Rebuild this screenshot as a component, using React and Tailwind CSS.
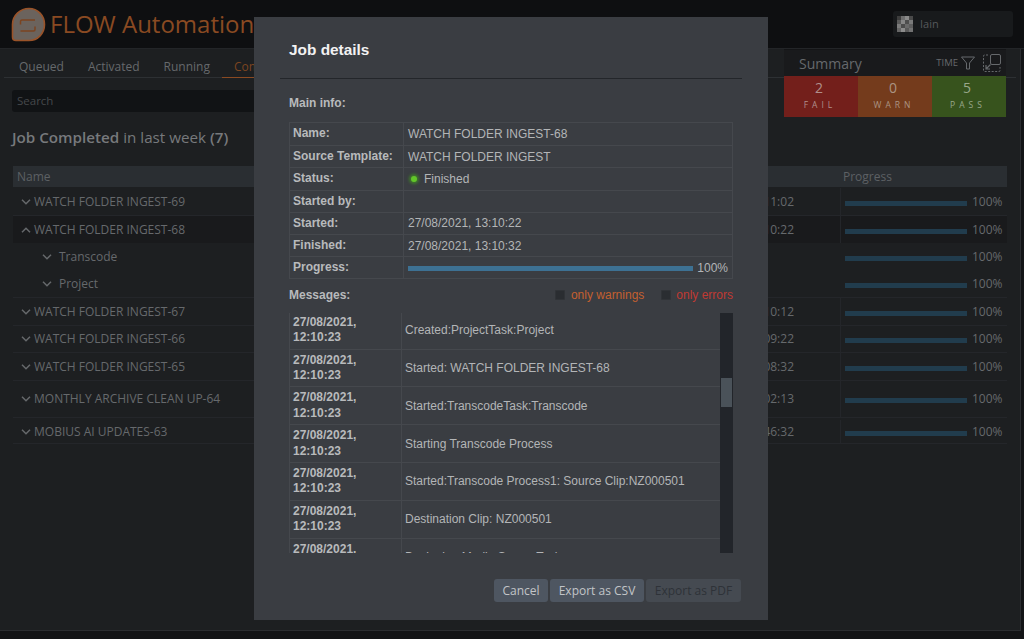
import React from "react";

const rows = [
  { name: "WATCH FOLDER INGEST-69", time: "27/08/2021, 13:11:02", h: "h-[28px]", line: true },
  { name: "WATCH FOLDER INGEST-68", time: "27/08/2021, 13:10:22", h: "h-[27px]", open: true, line: false },
  { name: "Transcode", h: "h-[28px]", child: true },
  { name: "Project", h: "h-[27px]", child: true, line: true },
  { name: "WATCH FOLDER INGEST-67", time: "27/08/2021, 13:10:12", h: "h-[28px]", line: true },
  { name: "WATCH FOLDER INGEST-66", time: "27/08/2021, 13:09:22", h: "h-[27px]", line: true },
  { name: "WATCH FOLDER INGEST-65", time: "27/08/2021, 13:08:32", h: "h-[28px]", line: true },
  { name: "MONTHLY ARCHIVE CLEAN UP-64", time: "26/08/2021, 17:02:13", h: "h-[37px]", line: true },
  { name: "MOBIUS AI UPDATES-63", time: "25/08/2021, 14:46:32", h: "h-[26px] pt-[2px]", line: true },
];

const info = [
  ["Name:", "WATCH FOLDER INGEST-68"],
  ["Source Template:", "WATCH FOLDER INGEST"],
  ["Status:", "status"],
  ["Started by:", ""],
  ["Started:", "27/08/2021, 13:10:22"],
  ["Finished:", "27/08/2021, 13:10:32"],
  ["Progress:", "progress"],
];

const messages = [
  "Created:ProjectTask:Project",
  "Started: WATCH FOLDER INGEST-68",
  "Started:TranscodeTask:Transcode",
  "Starting Transcode Process",
  "Started:Transcode Process1: Source Clip:NZ000501",
  "Destination Clip: NZ000501",
  "Beginning Media Server Task",
];

const avatar = [
  "#3d3d3d", "#6e6e6e", "#8a8a8a", "#4a4a4a",
  "#5a5a5a", "#868686", "#4e4e4e", "#7a7a7a",
  "#7c7c7c", "#4c4c4c", "#6a6a6a", "#5e5e5e",
  "#666666", "#8c8c8c", "#5a5a5a", "#727272",
];

function Chevron({ up }) {
  return (
    <svg width="10" height="6" viewBox="0 0 10 6" fill="none" stroke="#66696c" strokeWidth="1.5" className="shrink-0">
      <path d={up ? "M1 5.2 5 1.2l4 4" : "M1 .8l4 4 4-4"} />
    </svg>
  );
}

function Row({ r }) {
  return (
    <div className={`flex items-center ${r.h} ${r.open ? "bg-[#191a1c]" : ""} ${r.line ? "border-b border-[#24262a]" : ""}`}>
      <div className={`flex flex-1 items-center min-w-0 ${r.child ? "pl-[29px] gap-[7px]" : "pl-[8px] gap-[3px]"}`}>
        <Chevron up={r.open} />
        <span className="whitespace-nowrap text-[12px] text-[#66696c]">{r.name}</span>
      </div>
      <div className="w-[130px] shrink-0 text-right text-[12px] whitespace-nowrap text-[#66696c]">
        {r.time || ""}
      </div>
      <div className={`w-[167px] ml-[46px] shrink-0 h-full flex items-center pl-[4px] border-l ${r.child ? "border-transparent" : "border-[#24262a]"}`}>
        <div className="w-[122px] h-[5px] mt-[3px] bg-[#213c4d]" />
        <span className="ml-[5px] text-[12px] text-[#66696c]">100%</span>
      </div>
    </div>
  );
}

function Logo() {
  return (
    <svg width="35" height="35" viewBox="0 0 35 35" className="shrink-0">
      <path d="M18 1.5C26.8 1.5 33.5 8.6 33.5 17.5S26.8 33.5 18 33.5H5C2.8 33.5 1.5 32.2 1.5 30V17.5C1.5 8.6 9.2 1.5 18 1.5Z" fill="#6b635d" stroke="#9a5329" strokeWidth="1.6" />
      <path d="M9.5 17.5v-3c0-1 .7-1.5 1.5-1.5h13M24 19.5v3c0 1-.7 1.5-1.5 1.5H9.5" fill="none" stroke="#7c4420" strokeWidth="1.5" />
    </svg>
  );
}

function Stat({ bg, color, value, label }) {
  return (
    <div className={`flex-1 ${bg} ${color} leading-none pt-[5px] pr-[4px]`}>
      <div className="text-[14px]">{value}</div>
      <div className="mt-[6px] ml-[2px] text-[8.5px] tracking-[4px]">{label}</div>
    </div>
  );
}

function Background() {
  return (
    <div className="w-[1024px] h-[639px] overflow-hidden bg-[#131416] font-['Open_Sans',sans-serif]">
      <header className="h-[49px] bg-[#0e0f11] flex items-center pl-[11px] pr-[11px] border-b border-[#232528]">
        <Logo />
        <span className="ml-[4px] text-[24px] text-[#8a4a22] whitespace-nowrap">FLOW Automation</span>
        <div className="ml-auto w-[120px] h-[26px] rounded-[3px] bg-[#181a1c] flex items-center pl-[4px]">
          <div className="w-[16px] h-[16px] grid grid-cols-4">
            {avatar.map((c, i) => <span key={i} style={{ background: c }} />)}
          </div>
          <span className="ml-[7px] text-[11px] text-[#55585b]">Iain</span>
        </div>
      </header>

      <div className="w-[1021px] h-[582px] bg-[#1d1f21] border-r border-b border-[#2b2d30]">
        <div className="relative h-[29px] mx-[4px] flex items-start border-b border-[#2d3033] text-[12px] text-[#66696c]">
          <span className="ml-[15px] mt-[9px] leading-[17px]">Queued</span>
          <span className="ml-[24px] mt-[9px] leading-[17px]">Activated</span>
          <span className="ml-[24px] mt-[9px] leading-[17px]">Running</span>
          <span className="ml-[12px] h-[29px] px-[12px] pt-[9px] leading-[17px] text-[#7c4520] border-b border-[#8a4a22]">Completed</span>
          <div className="absolute right-[10px] top-0 w-[222px] h-[68px] flex flex-col bg-[#191a1c] z-10">
            <div className="h-[27px] flex items-center pl-[15px] pr-[5px] border-t border-[#141517] text-[#66696c]">
              <span className="text-[14px]">Summary</span>
              <span className="ml-auto text-[9.5px]">TIME</span>
              <svg width="14" height="14" viewBox="0 0 14 14" fill="none" stroke="#66696c" strokeWidth="1" className="ml-[3px]">
                <path d="M.5 1h13L8.5 7v6L5.5 13V7z" />
              </svg>
              <svg width="18" height="18" viewBox="0 0 18 18" fill="none" stroke="#66696c" strokeWidth="1" className="ml-[8px]">
                <rect x="7.5" y=".5" width="10" height="10" rx="1.5" />
                <path d="M5 1H1.5a1 1 0 0 0-1 1v14.5a1 1 0 0 0 1 1H16a1 1 0 0 0 1-1V13" strokeDasharray="2 1.5" />
                <path d="M7.5 10.5l-4.5 4.5M3 11v4h4" strokeWidth="1.2" />
              </svg>
            </div>
            <div className="flex flex-1 text-center">
              <Stat bg="bg-[#731f1b]" color="text-[#b08f8c]" value="2" label="FAIL" />
              <Stat bg="bg-[#743b1c]" color="text-[#ab9483]" value="0" label="WARN" />
              <Stat bg="bg-[#37531d]" color="text-[#98a78a]" value="5" label="PASS" />
            </div>
          </div>
        </div>

        <div className="mx-[12px] mt-[12px] h-[22px] w-[500px] rounded-[3px] bg-[#111315] pl-[5px] text-[11.5px] leading-[22px] text-[#45484b]">Search</div>

        <h2 className="ml-[12px] mt-[13px] h-[24px] text-[15.2px] leading-[24px] text-[#77797c]">
          <b className="font-semibold">Job Completed</b> in last week <b className="font-semibold">(7)</b>
        </h2>

        <div className="ml-[13px] mt-[17px] w-[994px]">
          <div className="h-[21px] mb-[1px] flex items-center bg-[#2a2e32] text-[12px] text-[#5d6064]">
            <span className="pl-[4px]">Name</span>
            <span className="ml-auto w-[164px]">Progress</span>
          </div>
          {rows.map((r) => <Row key={r.name} r={r} />)}
        </div>
      </div>
    </div>
  );
}

function Modal() {
  return (
    <div className="absolute left-[254px] top-[17px] w-[514px] h-[603px] bg-[#3a3d42] px-[26px] font-['Liberation_Sans',Arial,sans-serif] text-[12px] text-[#b3b5b7]">
      <div className="h-[62px] border-b border-[#23262a] pl-[9px] pt-[23px] text-[15.4px] leading-[20px] font-bold text-[#f2f2f2]">Job details</div>
      <div className="ml-[9px] mt-[17px] leading-[14px] font-bold text-[#b8babc]">Main info:</div>

      <div className="ml-[9px] mt-[12px] w-[444px] border border-[#45484d]">
        {info.map(([k, v], i) => (
          <div key={k} className={`flex h-[22.2px] items-center ${i ? "border-t border-[#45484d]" : ""}`}>
            <div className="w-[114px] h-full shrink-0 border-r border-[#45484d] pl-[3px] font-bold leading-[21px] text-[#b8babc]">{k}</div>
            <div className="flex-1 flex items-center pl-[4px] pr-[4px] min-w-0">
              {v === "status" ? (
                <>
                  <span className="ml-[3px] w-[6px] h-[6px] rounded-full bg-[#62c629] shadow-[0_0_3px_2px_#3f7a2b]" />
                  <span className="ml-[7px]">Finished</span>
                </>
              ) : v === "progress" ? (
                <>
                  <div className="flex-1 h-[5px] mt-[1px] bg-[#3d7193]" />
                  <span className="ml-[4px]">100%</span>
                </>
              ) : v}
            </div>
          </div>
        ))}
      </div>

      <div className="ml-[9px] mt-[8px] w-[444px] h-[16px] flex items-center">
        <span className="font-bold text-[#b8babc]">Messages:</span>
        <span className="ml-auto w-[10px] h-[10px] rounded-[1px] bg-[#2a2d31] border border-[#303337]" />
        <span className="ml-[6px] text-[#c4602f]">only warnings</span>
        <span className="ml-[17px] w-[10px] h-[10px] rounded-[1px] bg-[#2a2d31] border border-[#303337]" />
        <span className="ml-[5px] text-[#c03a33]">only errors</span>
      </div>

      <div className="ml-[9px] mt-[10px] w-[444px] h-[240px] flex">
        <div className="flex-1 overflow-hidden border-l border-[#45484d]">
          <div className="-mt-[1.5px]">
            {messages.map((m) => (
              <div key={m} className="flex h-[37.8px] border-b border-[#45484d]">
                <div className="w-[112px] shrink-0 border-r border-[#45484d] pl-[3px] flex items-center font-bold leading-[15.4px] text-[#b8babc]">
                  <span>27/08/2021,<br />12:10:23</span>
                </div>
                <div className="flex-1 pl-[3px] flex items-center">{m}</div>
              </div>
            ))}
          </div>
        </div>
        <div className="w-[13px] bg-[#22252a] pt-[65px] px-[1px]">
          <div className="h-[29px] bg-[#4a5259]" />
        </div>
      </div>

      <div className="mt-[26px] mr-[1px] flex justify-end gap-[2px] font-['Open_Sans',sans-serif] text-[12px]">
        <button className="w-[54px] h-[23px] rounded-[3px] bg-[#4e5661] text-[#c2c5c8]">Cancel</button>
        <button className="w-[94px] h-[23px] rounded-[3px] bg-[#4e5661] text-[#c2c5c8]">Export as CSV</button>
        <button className="w-[95px] h-[23px] rounded-[3px] bg-[#454a51] text-[#2e3238]">Export as PDF</button>
      </div>
    </div>
  );
}

export default function App() {
  return (
    <div className="relative w-[1024px] h-[639px] overflow-hidden">
      <Background />
      <Modal />
    </div>
  );
}
